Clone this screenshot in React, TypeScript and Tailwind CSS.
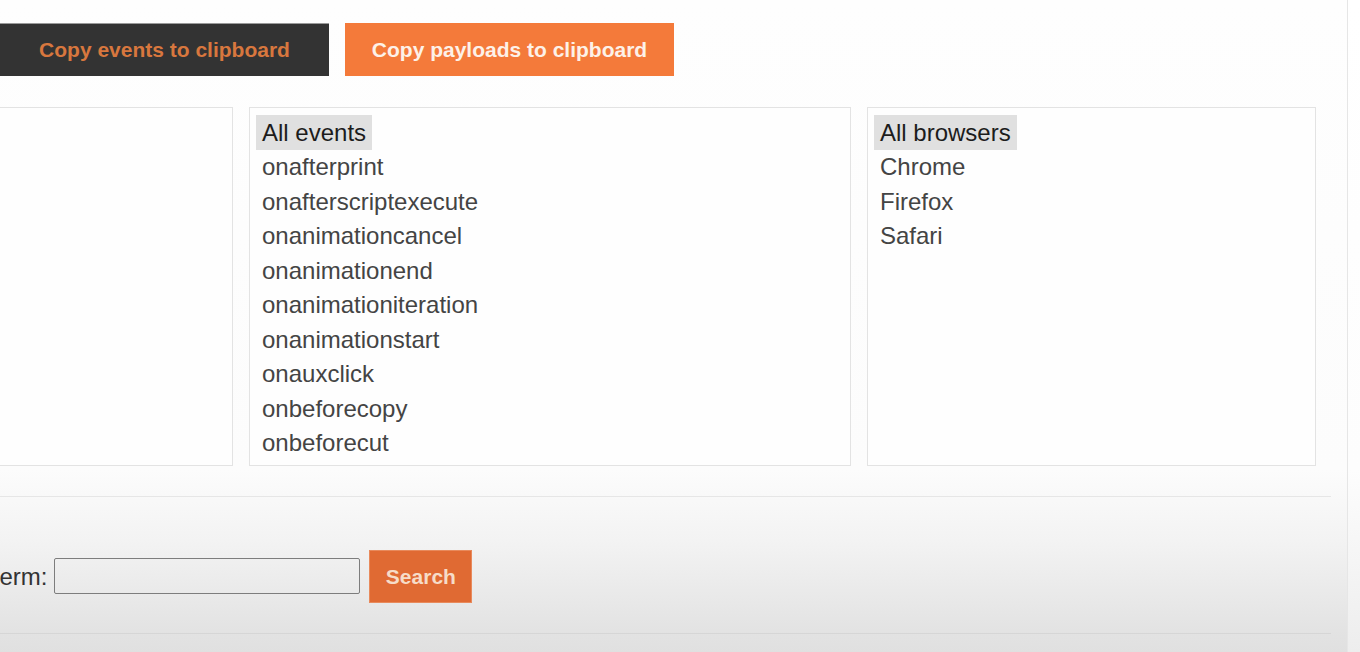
import { useState } from "react";

const events = [
  "All events",
  "onafterprint",
  "onafterscriptexecute",
  "onanimationcancel",
  "onanimationend",
  "onanimationiteration",
  "onanimationstart",
  "onauxclick",
  "onbeforecopy",
  "onbeforecut",
];

const browsers = ["All browsers", "Chrome", "Firefox", "Safari"];

function ListBox({
  items,
  selected,
  onSelect,
  className,
}: {
  items: string[];
  selected: string;
  onSelect: (v: string) => void;
  className: string;
}) {
  return (
    <div className={`h-[359px] border border-[#e3e3e3] bg-[#fefefe] px-[6px] pt-[7px] overflow-hidden ${className}`}>
      {items.map((item) => (
        <div key={item} className="flex">
          <button
            onClick={() => onSelect(item)}
            className={`px-[6px] h-[34.5px] text-left text-[24px] leading-[33px] ${
              selected === item ? "bg-[#e0e0e0] text-[#1c1c1c]" : "text-[#444]"
            }`}
          >
            {item}
          </button>
        </div>
      ))}
    </div>
  );
}

export default function App() {
  const [event, setEvent] = useState("All events");
  const [browser, setBrowser] = useState("All browsers");
  const [term, setTerm] = useState("");

  return (
    <div className="flex w-[1360px] h-[652px] overflow-hidden font-['Liberation_Sans',Arial,sans-serif]">
      <div className="w-[1347px] flex flex-col bg-[linear-gradient(to_bottom,#fefefe_0px,#fcfcfc_470px,#f3f3f3_540px,#e3e3e3_630px,#e0e0e0_652px)]">
        {/* Copy buttons */}
        <div className="flex gap-4 pt-[23px]">
          <button className="w-[329px] h-[53px] bg-[#333333] border-t border-[#9a9a9a] text-[#d8773e] text-[21px] font-bold">
            Copy events to clipboard
          </button>
          <button className="w-[329px] h-[53px] bg-[#f47a3a] text-[#fdf1e8] text-[21px] font-bold">
            Copy payloads to clipboard
          </button>
        </div>

        {/* Filters */}
        <div className="flex gap-4 mt-[31px] -ml-[40px]">
          <div className="w-[273px] h-[359px] border border-[#e3e3e3] bg-[#fefefe]" />
          <ListBox items={events} selected={event} onSelect={setEvent} className="w-[602px]" />
          <ListBox items={browsers} selected={browser} onSelect={setBrowser} className="w-[449px]" />
        </div>

        {/* Search */}
        <div className="w-[1331px] mt-[30px] border-t border-t-[#e6e6e6] border-b border-b-[#d6d6d6] pt-[53px] pb-[30px]">
          <div className="flex items-center h-[53px] -ml-[90px]">
            <label className="text-[24px] text-[#333] mr-[7px]">Search term:</label>
            <input
              value={term}
              onChange={(e) => setTerm(e.target.value)}
              className="w-[306px] h-[36px] -mt-[2px] border border-[#7d7d7d] rounded-[2px] bg-transparent px-2 text-[20px] outline-none"
            />
            <button className="ml-[9px] w-[103px] h-[53px] bg-[#e06a33] border border-[#e88a5c] text-[#f6dcc8] text-[21px] font-bold">
              Search
            </button>
          </div>
        </div>
      </div>
      <div className="w-px bg-[#e6e6e6]" />
      <div className="flex-1 bg-[linear-gradient(to_bottom,#ffffff_0px,#fdfdfd_470px,#ededed_652px)]" />
    </div>
  );
}
